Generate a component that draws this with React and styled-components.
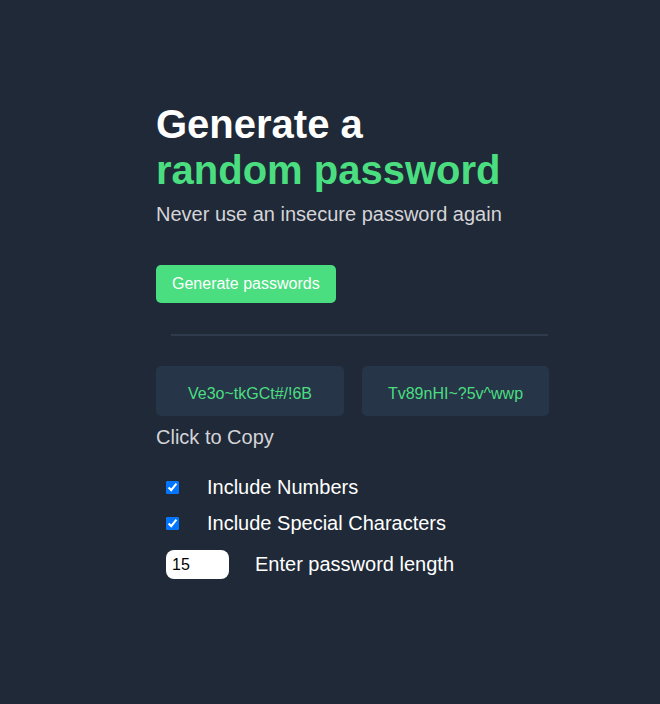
import React, { useState } from "react";
import styled, { createGlobalStyle } from "styled-components";

const GlobalStyle = createGlobalStyle`
  html, body {
    margin: 0;
    padding: 0;
    background: #1f2937;
  }
  body {
    font-family: "Liberation Sans", Arial, sans-serif;
  }
`;

const Page = styled.main`
  min-height: 704px;
  background: #1f2937;
  padding: 101px 0 0 156px;
  box-sizing: border-box;
`;

const Card = styled.section`
  width: 393px;
`;

const Title = styled.h1`
  margin: 0 0 10px;
  font-size: 40px;
  line-height: 46px;
  font-weight: 700;
  color: #ffffff;
  span {
    color: #4ade80;
  }
`;

const Subtitle = styled.p`
  margin: 0;
  font-size: 20px;
  line-height: 23px;
  color: #d5d4d8;
`;

const GenerateButton = styled.button`
  margin-top: 39px;
  height: 38px;
  padding: 0 16px;
  border: none;
  border-radius: 5px;
  background: #4ade80;
  color: #ffffff;
  font-family: inherit;
  font-size: 16px;
  cursor: pointer;
`;

const Divider = styled.hr`
  margin: 31px 0 0 15px;
  width: 377px;
  height: 2px;
  border: none;
  background: #2f3b4d;
`;

const PasswordRow = styled.div`
  display: grid;
  grid-template-columns: 188px 187px;
  gap: 18px;
  margin-top: 30px;
`;

const PasswordBox = styled.div`
  height: 50px;
  border-radius: 5px;
  background: #273549;
  color: #4ade80;
  font-size: 16px;
  display: flex;
  align-items: center;
  justify-content: center;
  padding-top: 6px;
  box-sizing: border-box;
  cursor: pointer;
`;

const Hint = styled.p`
  margin: 10px 0 0;
  font-size: 20px;
  line-height: 23px;
  color: #d5d4d8;
`;

const Options = styled.div`
  margin-top: 27px;
  display: flex;
  flex-direction: column;
  gap: 13px;
`;

const OptionRow = styled.label`
  display: flex;
  align-items: center;
  gap: ${(p) => p.$gap || 28}px;
  padding-left: 10px;
  margin-top: ${(p) => p.$offset || 0}px;
  height: ${(p) => p.$height || 23}px;
  font-size: 20px;
  color: #ffffff;
`;

const Check = styled.input`
  margin: 0;
  width: 13px;
  height: 13px;
`;

const LengthInput = styled.input`
  width: 63px;
  height: 29px;
  box-sizing: border-box;
  border: none;
  border-radius: 8px;
  padding: 0 6px;
  background: #ffffff;
  color: #000000;
  font-family: inherit;
  font-size: 16px;
  outline: none;
`;

export default function App() {
  const [numbers, setNumbers] = useState(true);
  const [special, setSpecial] = useState(true);
  const [length, setLength] = useState(15);
  const passwords = ["Ve3o~tkGCt#/!6B", "Tv89nHI~?5v^wwp"];

  return (
    <>
      <GlobalStyle />
      <Page>
        <Card>
          <Title>
            Generate a<br />
            <span>random password</span>
          </Title>
          <Subtitle>Never use an insecure password again</Subtitle>
          <GenerateButton type="button">Generate passwords</GenerateButton>
          <Divider />
          <PasswordRow>
            {passwords.map((pw) => (
              <PasswordBox key={pw}>{pw}</PasswordBox>
            ))}
          </PasswordRow>
          <Hint>Click to Copy</Hint>
          <Options>
            <OptionRow>
              <Check
                type="checkbox"
                checked={numbers}
                onChange={() => setNumbers(!numbers)}
              />
              Include Numbers
            </OptionRow>
            <OptionRow>
              <Check
                type="checkbox"
                checked={special}
                onChange={() => setSpecial(!special)}
              />
              Include Special Characters
            </OptionRow>
            <OptionRow $gap={26} $height={29} $offset={2}>
              <LengthInput
                type="text"
                value={length}
                onChange={(e) => setLength(e.target.value)}
              />
              Enter password length
            </OptionRow>
          </Options>
        </Card>
      </Page>
    </>
  );
}
